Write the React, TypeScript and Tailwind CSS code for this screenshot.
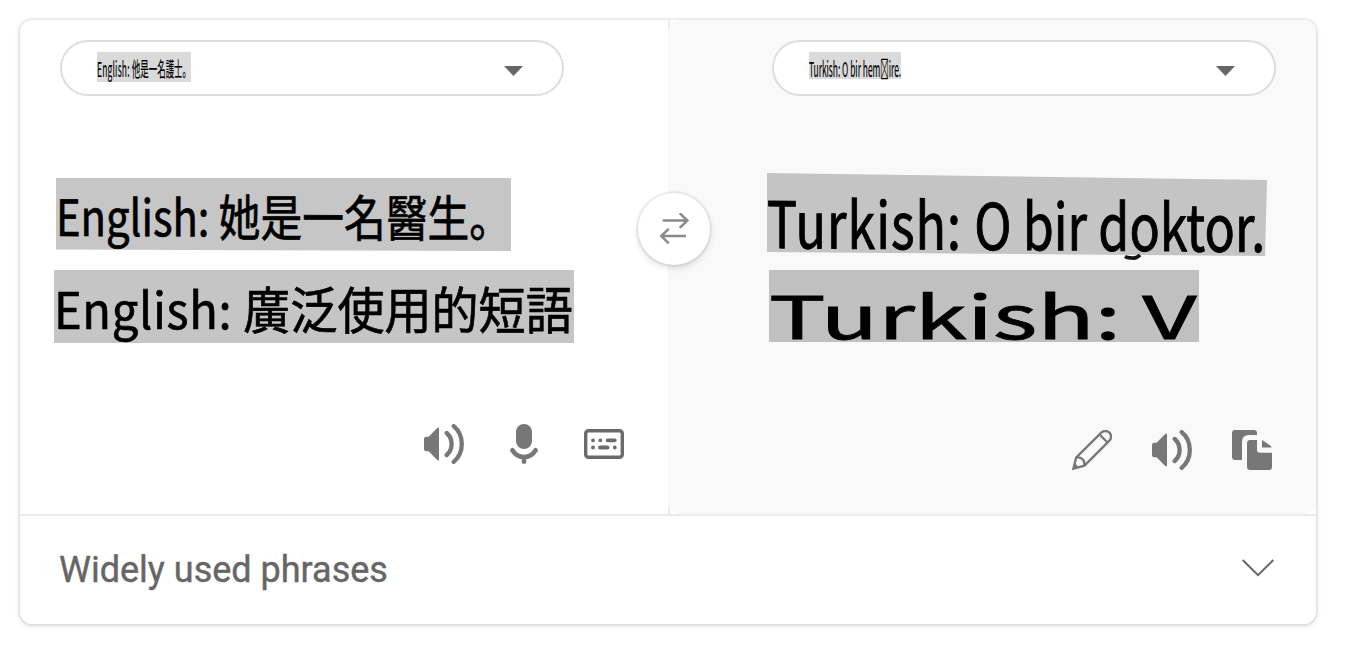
import { useLayoutEffect, useRef, useState } from "react";
import type { ReactNode } from "react";

type FittedTextProps = {
  children: ReactNode;
  width: number;
  className: string;
  textClassName: string;
};

/* Stretches or condenses one line of text to fill the given width. */
function FittedText({ children, width, className, textClassName }: FittedTextProps) {
  const ref = useRef<HTMLSpanElement>(null);
  const [scale, setScale] = useState(1);

  useLayoutEffect(() => {
    const fit = () => {
      if (ref.current) setScale(width / ref.current.offsetWidth);
    };
    fit();
    document.fonts.ready.then(fit);
  }, [width]);

  return (
    <div className={className}>
      <div className={textClassName}>
        <span
          ref={ref}
          className="inline-block origin-top-left whitespace-pre"
          style={{ transform: `scaleX(${scale})` }}
        >
          {children}
        </span>
      </div>
    </div>
  );
}

const cjk =
  "text-black leading-[1.448] [font-family:'Noto_Sans_CJK_JP','Noto_Sans',sans-serif]";

function LanguageSelect({ children }: { children: ReactNode }) {
  return (
    <button className="flex h-14 w-[504px] items-start justify-between rounded-full border-2 border-[#dddddd] bg-white pt-2.5 pr-[39px] pl-[35px] text-left">
      {children}
      <svg className="mt-3.5 h-2.5 w-[19px] text-[#666666]" viewBox="0 0 19 10" fill="currentColor">
        <path d="M0 0H19L9.5 10Z" />
      </svg>
    </button>
  );
}

function SpeakerIcon() {
  return (
    <svg className="size-10" viewBox="0 0 40 40" fill="none">
      <path
        d="M2.2 12.7H4.6L13 4.3Q15 2.6 15 4.8V35.2Q15 37.4 13 35.7L4.6 27.3H2.2Q0 27.3 0 25.1V14.9Q0 12.7 2.2 12.7Z"
        fill="currentColor"
      />
      <path
        d="M22.7 9Q27.6 13.2 27.6 20T22.7 31M29.7 2.2Q37.8 9 37.8 20T29.7 37.8"
        stroke="currentColor"
        strokeWidth="4.3"
        strokeLinecap="round"
      />
    </svg>
  );
}

function MicIcon() {
  return (
    <svg className="size-10" viewBox="0 0 40 40" fill="none">
      <rect x="12" y="0" width="16" height="25" rx="8" fill="currentColor" />
      <path
        d="M8.4 26.2C14 35.3 26 35.3 31.6 26.2M20 33V37.7"
        stroke="currentColor"
        strokeWidth="4.6"
        strokeLinecap="round"
      />
    </svg>
  );
}

function KeyboardIcon() {
  return (
    <svg className="size-10 text-[#6b6b6b]" viewBox="0 0 40 40" fill="none" stroke="currentColor">
      <rect x="1.7" y="6.7" width="36.6" height="26.6" rx="2.8" strokeWidth="3.4" />
      <path
        d="M9 16.3H9.01M16.3 16.3H16.31M23.6 16.3H30.8M9 23.5H9.01M16 23.5H23.6M30.8 23.5H30.81"
        strokeWidth="3.8"
        strokeLinecap="round"
      />
    </svg>
  );
}

function PencilIcon() {
  return (
    <svg className="size-10" viewBox="0 0 40 40" fill="none" stroke="currentColor" strokeWidth="2.3">
      <path d="M1.3 38.7L4.3 27.4L29.3 2.6C31.4 .5 35.2 .4 37.4 2.6C39.6 4.8 39.5 8.5 37.4 10.6L12.5 35.6Z" />
      <path d="M27.3 4.2L35.8 12.7M4.4 27.4C9.4 26.6 13.2 30.4 12.4 35.5" />
      <path d="M3.2 33.4L6.6 36.8L1 39Z" fill="currentColor" stroke="none" />
    </svg>
  );
}

function CopyIcon() {
  return (
    <svg className="size-10" viewBox="0 0 40 40" fill="currentColor">
      <path d="M3 0H22Q25 0 25 3V5H17Q10 5 10 12V30H3Q0 30 0 27V3Q0 0 3 0Z" />
      <path d="M18 10H25V19.5Q25 22.7 28.2 22.7H40V37Q40 40 37 40H18Q15 40 15 37V13Q15 10 18 10Z" />
      <path d="M30 10Q31 10.3 32 11.2L38.5 15.8Q39.3 16.4 39.6 17.5H30Z" />
    </svg>
  );
}

function SwapIcon() {
  return (
    <svg
      className="h-8 w-8 text-[#8a8a8a]"
      viewBox="0 0 32 32"
      fill="none"
      stroke="currentColor"
      strokeWidth="2.5"
    >
      <path d="M4.7 7.6H29.5M21.7 .2L29.3 7.6L21.7 14.9" />
      <path d="M28 23.1H3.2M10.7 15.8L3.3 23.1L10.7 30.4" />
    </svg>
  );
}

export default function App() {
  return (
    <main className="h-[664px] w-[1350px] overflow-hidden bg-white p-5 [font-family:Roboto,sans-serif]">
      <section className="flex h-[604px] w-[1296px] flex-col rounded-xl bg-white shadow-[0_0_0_2px_rgba(0,0,0,0.055),0_2px_6px_rgba(0,0,0,0.11)]">
        <div className="relative flex h-[496px] border-b-2 border-[#ebebeb]">
          <div className="flex w-[648px] flex-col pt-5 pl-[34px]">
            <div className="pl-1.5">
              <LanguageSelect>
                <FittedText width={94} className="h-[30px] w-[94px] bg-[#dadada] pt-0.5" textClassName={`text-[20.7px] [-webkit-text-stroke:0.2px_black] ${cjk}`}>
                  <span className="tracking-[0.5px]">English: </span>他是一名護士。
                </FittedText>
              </LanguageSelect>
            </div>
            <FittedText
              width={455}
              className="mt-[82px] ml-0.5 h-[73px] w-[455px] bg-[#c6c6c6] [clip-path:polygon(0_0,100%_0,100%_100%,0_98%)]"
              textClassName={`origin-left skew-y-[0.15deg] text-[50px] [-webkit-text-stroke:0.7px_black] ${cjk}`}
            >
              English: 她是一名醫生。
            </FittedText>
            <FittedText
              width={519}
              className="mt-[19px] h-[73px] w-[520px] bg-[#c5c5c5] pt-px"
              textClassName={`text-[50.5px] [-webkit-text-stroke:0.7px_black] ${cjk}`}
            >
              <span className="tracking-[0.7px]">English: </span>廣泛使用的短語
            </FittedText>
            <div className="mt-[81px] flex gap-10 pl-[370px] text-[#777777]">
              <SpeakerIcon />
              <MicIcon />
              <KeyboardIcon />
            </div>
          </div>

          <div className="w-[648px] rounded-tr-xl bg-[linear-gradient(to_right,#ebebeb_2px,white_2px)]">
            <div className="flex h-[494px] flex-col rounded-xl bg-[#f9f9f9] pt-5 pl-[99px]">
              <div className="pl-[5px]">
                <LanguageSelect>
                  <FittedText width={92} className="h-[27px] w-[92px] bg-[#dadada] pt-0.5" textClassName={`text-[20.7px] [-webkit-text-stroke:0.2px_black] ${cjk}`}>
                    {"Turkish: O bir hem\uE123ire."}
                  </FittedText>
                </LanguageSelect>
              </div>
              <div className="relative mt-[77px] h-[83px] w-[500px]">
                <FittedText
                  width={498}
                  className="h-[83px] w-[500px] bg-[#c4c4c4] pt-px [clip-path:polygon(0_0,100%_8.5%,99.6%_100%,0_95.2%)]"
                  textClassName={`origin-left skew-y-[0.45deg] text-[64px] [-webkit-text-stroke:1px_black] ${cjk}`}
                >
                  <span className="tracking-[1.3px]">Turkish: </span>O bir doktor.
                </FittedText>
                <svg className="absolute top-[81px] left-[357px] h-2 w-[18px]" viewBox="0 0 18 8" fill="none">
                  <path d="M1 2.5C4 4.4 6 3.7 8 4C12 4.6 14 3 16 1" stroke="#111111" strokeWidth="3.6" />
                </svg>
              </div>
              <FittedText
                width={428}
                className="mt-3.5 ml-0.5 h-[72px] w-[430px] bg-[#c0c0c0] pt-px"
                textClassName={`text-[59px] [-webkit-text-stroke:0.8px_black] ${cjk}`}
              >
                Turkish: V
              </FittedText>
              <div className="mt-[88px] flex gap-10 pl-[305px] text-[#777777]">
                <PencilIcon />
                <SpeakerIcon />
                <CopyIcon />
              </div>
            </div>
          </div>

          <button className="absolute top-[173px] left-[618px] flex size-[72px] items-center justify-center rounded-full bg-white shadow-[0_0_0_2px_rgba(0,0,0,0.055),0_3px_7px_rgba(0,0,0,0.14)]">
            <SwapIcon />
          </button>
        </div>

        <button className="flex flex-1 items-center justify-between pr-[42px] pl-[39px] text-[36px] text-[#666666] [-webkit-text-stroke:0.4px_#666666]">
          <span>Widely used phrases</span>
          <svg className="-mt-1 h-[18px] w-8" viewBox="0 0 32 18" fill="none" stroke="currentColor" strokeWidth="2">
            <path d="M.7 1L16 16.2L31.3 1" />
          </svg>
        </button>
      </section>
    </main>
  );
}
